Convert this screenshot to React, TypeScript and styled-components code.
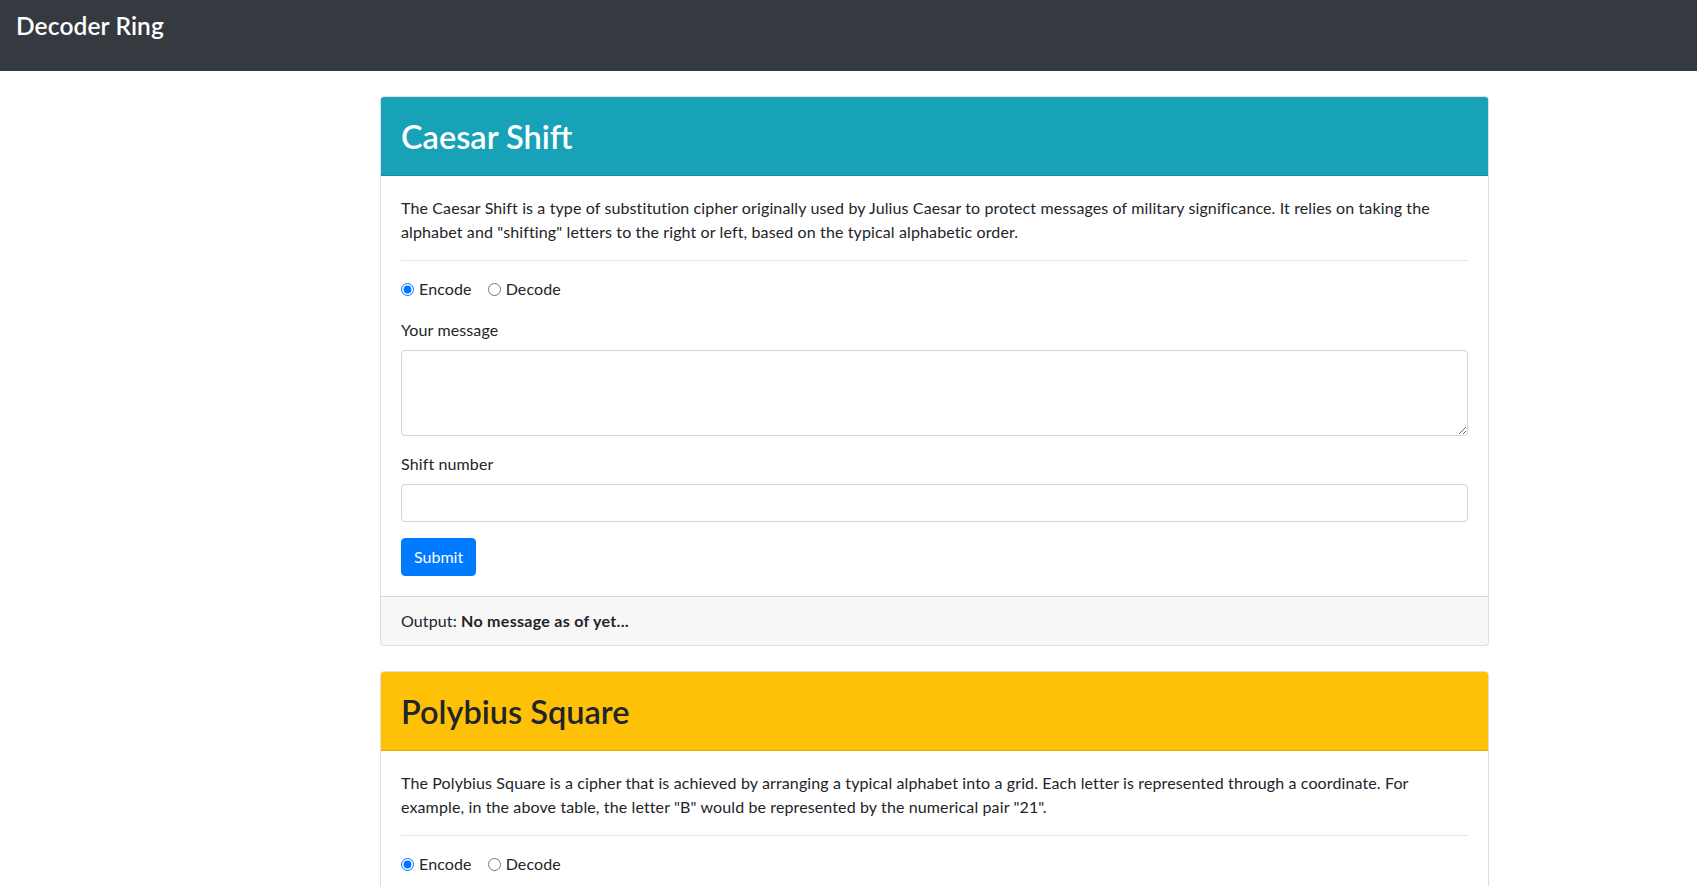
import styled, { createGlobalStyle } from 'styled-components';

const GlobalStyle = createGlobalStyle`
    body {
        margin: 0;
        font-family: Lato, "Noto Sans", sans-serif;
        font-size: 16px;
        line-height: 1.5;
        letter-spacing: 0.12px;
        color: #212529;
        background: #fff;
        overflow: hidden;
    }
    * { box-sizing: border-box; }
`;

const Navbar = styled.nav`
    height: 71px;
    background: #343a40;
    padding: 11px 16px 0;
`;

const Brand = styled.a`
    color: #fff;
    font-size: 24.5px;
    font-weight: 600;
    line-height: 29px;
    text-decoration: none;
`;

const Main = styled.main`
    padding: 25px 0 0 380px;
`;

const Card = styled.section`
    width: 1109px;
    margin-bottom: 25px;
    border: 1px solid rgba(0, 0, 0, 0.125);
    border-radius: 4px;
    overflow: hidden;
`;

const CardHeader = styled.header<{ $variant: 'info' | 'warning' }>`
    height: 79px;
    padding: 16px 20px 8px;
    border-bottom: 1px solid rgba(0, 0, 0, 0.125);
    background: ${p => (p.$variant === 'info' ? '#17a2b8' : '#ffc107')};
    color: ${p => (p.$variant === 'info' ? '#fff' : '#212529')};

    h1 {
        margin: 0;
        font-size: 32.5px;
        font-weight: 600;
        line-height: 48px;
        letter-spacing: 0;
    }
`;

const CardBody = styled.div`
    padding: 20px;

    p {
        margin: 0 0 16px;
    }

    hr {
        margin: 16px 0;
        border: 0;
        border-top: 1px solid rgba(0, 0, 0, 0.1);
    }
`;

const RadioRow = styled.div`
    display: flex;
    margin-bottom: 17px;
`;

const RadioLabel = styled.label`
    display: inline-flex;
    align-items: center;
    margin-right: 16px;

    input {
        margin: 0 5px 0 0;
        width: 13px;
        height: 13px;
    }
`;

const FormGroup = styled.div`
    margin-bottom: 16px;
`;

const Label = styled.label`
    display: block;
    margin-bottom: 8px;
`;

const Field = styled.input`
    display: block;
    width: 100%;
    height: 38px;
    padding: 6px 12px;
    font: inherit;
    color: #495057;
    border: 1px solid #ced4da;
    border-radius: 4px;
`;

const TextArea = styled.textarea`
    display: block;
    width: 100%;
    height: 86px;
    padding: 6px 12px;
    font: inherit;
    color: #495057;
    border: 1px solid #ced4da;
    border-radius: 4px;
    resize: vertical;
`;

const Button = styled.button`
    padding: 6px 12px;
    font: inherit;
    line-height: 24px;
    color: #fff;
    background: #007bff;
    border: 1px solid #007bff;
    border-radius: 4px;
`;

const CardFooter = styled.footer`
    padding: 12px 20px;
    background: rgba(0, 0, 0, 0.03);
    border-top: 1px solid rgba(0, 0, 0, 0.125);

    strong {
        letter-spacing: 0.3px;
    }
`;

const ciphers = [
    {
        id: 'caesar',
        title: 'Caesar Shift',
        variant: 'info' as const,
        text: 'The Caesar Shift is a type of substitution cipher originally used by Julius Caesar to protect messages of military significance. It relies on taking the alphabet and "shifting" letters to the right or left, based on the typical alphabetic order.',
        extra: 'Shift number',
    },
    {
        id: 'polybius',
        title: 'Polybius Square',
        variant: 'warning' as const,
        text: 'The Polybius Square is a cipher that is achieved by arranging a typical alphabet into a grid. Each letter is represented through a coordinate. For example, in the above table, the letter "B" would be represented by the numerical pair "21".',
        extra: null,
    },
];

export default function App() {
    return (
        <>
            <GlobalStyle />
            <Navbar>
                <Brand href='#'>Decoder Ring</Brand>
            </Navbar>
            <Main>
                {ciphers.map(c => (
                    <Card key={c.id}>
                        <CardHeader $variant={c.variant}>
                            <h1>{c.title}</h1>
                        </CardHeader>
                        <CardBody>
                            <p>{c.text}</p>
                            <hr />
                            <form onSubmit={e => e.preventDefault()}>
                                <RadioRow>
                                    <RadioLabel>
                                        <input type='radio' name={`${c.id}-mode`} defaultChecked />
                                        Encode
                                    </RadioLabel>
                                    <RadioLabel>
                                        <input type='radio' name={`${c.id}-mode`} />
                                        Decode
                                    </RadioLabel>
                                </RadioRow>
                                <FormGroup>
                                    <Label htmlFor={`${c.id}-input`}>Your message</Label>
                                    <TextArea id={`${c.id}-input`} rows={3} />
                                </FormGroup>
                                {c.extra && (
                                    <FormGroup>
                                        <Label htmlFor={`${c.id}-extra`}>{c.extra}</Label>
                                        <Field id={`${c.id}-extra`} type='number' />
                                    </FormGroup>
                                )}
                                <Button type='submit'>Submit</Button>
                            </form>
                        </CardBody>
                        <CardFooter>
                            Output: <strong>No message as of yet...</strong>
                        </CardFooter>
                    </Card>
                ))}
            </Main>
        </>
    );
}
